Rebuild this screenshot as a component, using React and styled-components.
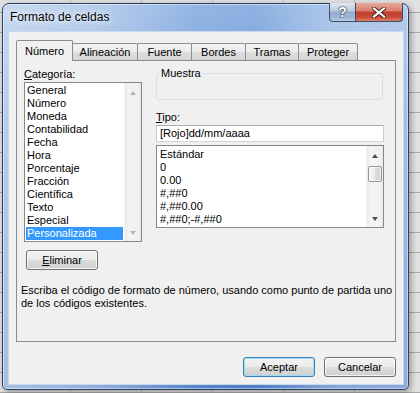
import React from "react";
import styled, { createGlobalStyle, css } from "styled-components";

const GlobalStyle = createGlobalStyle`
  html, body { margin: 0; padding: 0; }
  body {
    width: 420px;
    height: 393px;
    overflow: hidden;
    background-color: #e2e2e2;
    background-image:
      linear-gradient(#a9a9a9 1px, transparent 1px),
      linear-gradient(90deg, #bdbdbd 1px, transparent 1px);
    background-size: 71px 20px;
    background-position: 0 12px, 70px 0;
    font-family: "Liberation Sans", Arial, sans-serif;
    font-size: 11px;
    color: #000;
  }
`;

const Page = styled.div`
  padding: 3px 0 0 2px;
`;

const Window = styled.div`
  box-sizing: border-box;
  width: 407px;
  height: 387px;
  display: flex;
  flex-direction: column;
  padding: 0 5px 5px 6px;
  border: 1px solid #2b4263;
  border-radius: 7px 7px 5px 5px;
  background:
    linear-gradient(90deg, rgba(255,255,255,0.5) 0%, rgba(255,255,255,0.38) 22%, rgba(255,255,255,0.05) 48%, rgba(255,255,255,0) 62%, rgba(255,255,255,0.3) 82%, rgba(255,255,255,0.35) 100%),
    linear-gradient(180deg, #8fb2e2 0%, #6f9bd9 30%, #5d8ad0 70%, #4f7ec6 100%);
  box-shadow: 2px 2px 6px rgba(0, 0, 0, 0.35), inset 0 0 0 1px rgba(255, 255, 255, 0.45);
`;

const TitleBar = styled.div`
  height: 28px;
  display: flex;
  align-items: flex-start;
  padding-left: 1px;
`;

const Title = styled.div`
  flex: 1;
  margin-top: 6px;
  font-size: 12px;
  line-height: 15px;
  text-shadow: 0 0 5px #fff, 0 0 9px rgba(255, 255, 255, 0.85);
`;

const CaptionButtons = styled.div`
  display: flex;
  margin-top: -1px;
`;

const CaptionButton = styled.div`
  box-sizing: border-box;
  width: ${(p) => p.$w}px;
  height: 19px;
  display: flex;
  align-items: center;
  justify-content: center;
  border: 1px solid #3a4c66;
  border-top: none;
  color: #fff;
  font-weight: bold;
  font-size: 14px;
  ${(p) =>
    p.$close
      ? css`
          border-left: none;
          border-radius: 0 0 4px 0;
          background: linear-gradient(180deg, #e9a89a 0%, #d9806e 42%, #c2402b 52%, #c84b35 78%, #de8066 100%);
        `
      : css`
          border-radius: 0 0 0 4px;
          background: linear-gradient(180deg, #dfe7f2 0%, #bccbe0 42%, #96aed0 52%, #9cb4d4 78%, #b9cce4 100%);
        `}
`;

const HelpGlyph = styled.span`
  line-height: 14px;
  text-shadow: 0 0 1px #27364d, 0 0 1px #27364d, 0 0 2px #27364d;
`;

const Client = styled.div`
  flex: 1;
  background: #f0f0f0;
  box-shadow: 0 0 0 1px #c9daf0;
  padding: 8px 7px 0 7px;
  display: flex;
  flex-direction: column;
`;

const TabRow = styled.div`
  display: flex;
  align-items: flex-end;
  height: 20px;
  position: relative;
  z-index: 1;
`;

const Tab = styled.div`
  box-sizing: border-box;
  width: ${(p) => p.$w}px;
  height: ${(p) => (p.$active ? 21 : 17)}px;
  margin-bottom: ${(p) => (p.$active ? -1 : 0)}px;
  margin-left: -1px;
  &:first-child { margin-left: 0; }
  border: 1px solid #898c95;
  border-bottom: none;
  border-radius: 2px 2px 0 0;
  padding-top: ${(p) => (p.$active ? 2 : 0)}px;
  line-height: 16px;
  text-align: center;
  white-space: nowrap;
  position: relative;
  z-index: ${(p) => (p.$active ? 2 : 1)};
  background: ${(p) =>
    p.$active
      ? "#f0f0f0"
      : "linear-gradient(180deg, #f3f3f3 0%, #ebebeb 50%, #dedede 51%, #d4d4d4 100%)"};
`;

const Panel = styled.div`
  box-sizing: border-box;
  width: 380px;
  height: 282px;
  border: 1px solid #898c95;
  background: #f0f0f0;
  padding: 6px 10px 0 4px;
`;

const TopRow = styled.div`
  display: flex;
  gap: 14px;
  padding-left: 3px;
`;

const LeftCol = styled.div`
  width: 118px;
  display: flex;
  flex-direction: column;
  align-items: flex-start;
`;

const RightCol = styled.div`
  width: 228px;
  display: flex;
  flex-direction: column;
`;

const Label = styled.div`
  line-height: 15px;
  margin-top: ${(p) => p.$top || 0}px;
`;

const Key = styled.span`
  text-decoration: underline;
`;

const ListBox = styled.div`
  box-sizing: border-box;
  width: ${(p) => p.$w}px;
  height: ${(p) => p.$h}px;
  margin-top: ${(p) => p.$top || 0}px;
  border: 1px solid #828790;
  background: #fff;
  display: flex;
  overflow: hidden;
`;

const Items = styled.div`
  flex: 1;
  padding-top: ${(p) => p.$pad}px;
  padding-left: ${(p) => p.$indent}px;
  overflow: hidden;
`;

const Item = styled.div`
  height: 13px;
  line-height: 13px;
  margin-right: 1px;
  padding-left: 1px;
  white-space: nowrap;
  ${(p) =>
    p.$selected &&
    css`
      background: #3399ff;
      color: #fff;
    `}
`;

const ScrollBar = styled.div`
  width: 17px;
  display: flex;
  flex-direction: column;
  background: linear-gradient(90deg, #e7e7e7 0%, #f4f4f4 20%, #f1f1f1 80%, #e9e9e9 100%);
  border-left: 1px solid #f7f7f7;
  box-sizing: border-box;
`;

const ScrollButton = styled.div`
  height: 17px;
  display: flex;
  justify-content: center;
  align-items: center;
  padding-top: ${(p) => (p.$up ? 3 : 0)}px;
  box-sizing: border-box;
`;

const Arrow = styled.span`
  width: 0;
  height: 0;
  border-left: 3.5px solid transparent;
  border-right: 3.5px solid transparent;
  ${(p) =>
    p.$up
      ? css`border-bottom: 4px solid ${p.$off ? "#b4b4b4" : "#4f4f4f"};`
      : css`border-top: 4px solid ${p.$off ? "#b4b4b4" : "#4f4f4f"};`}
`;

const Track = styled.div`
  flex: 1;
`;

const Thumb = styled.div`
  box-sizing: border-box;
  height: 16px;
  margin: 3px 1px 0 1px;
  border: 1px solid #979797;
  border-radius: 2px;
  background: linear-gradient(90deg, #f4f4f4 0%, #ececec 50%, #dcdcdc 51%, #d2d2d2 100%);
  box-shadow: inset 0 0 0 1px rgba(255, 255, 255, 0.7);
`;

const Button = styled.div`
  box-sizing: border-box;
  width: 72px;
  height: 20px;
  margin-left: ${(p) => p.$left || 0}px;
  margin-top: ${(p) => p.$top || 0}px;
  border: 1px solid ${(p) => (p.$default ? "#3c7fb1" : "#707070")};
  border-radius: 3px;
  line-height: 18px;
  text-align: center;
  background: linear-gradient(180deg, #f3f3f3 0%, #ebebeb 48%, #dddddd 50%, #cfcfcf 100%);
  box-shadow: inset 0 0 0 1px ${(p) => (p.$default ? "#9edbf8" : "rgba(255,255,255,0.75)")};
`;

const Group = styled.fieldset`
  box-sizing: border-box;
  width: 227px;
  margin: 0;
  padding: 0 3px;
  border: 1px solid #d5dfe5;
  border-radius: 3px;
`;

const Legend = styled.legend`
  padding: 0 1px;
  line-height: 13px;
`;

const Sample = styled.div`
  height: 19px;
`;

const TextBox = styled.div`
  box-sizing: border-box;
  width: 228px;
  height: 17px;
  border: 1px solid;
  border-color: #abadb3 #c9ccd3 #d2d6dc #c9ccd3;
  background: #fff;
  padding-left: 3px;
  line-height: 15px;
`;

const Description = styled.div`
  margin-top: 14px;
  line-height: 13px;
  white-space: nowrap;
`;

const ButtonRow = styled.div`
  display: flex;
  justify-content: flex-end;
  gap: 9px;
  margin-top: 15px;
  width: 380px;
`;

const CloseIcon = () => (
  <svg width="14" height="11" viewBox="0 0 14 11">
    <path d="M2 1.5 L12 9.5 M12 1.5 L2 9.5" stroke="#3a1d18" strokeWidth="4" strokeLinecap="square" />
    <path d="M2 1.5 L12 9.5 M12 1.5 L2 9.5" stroke="#fff" strokeWidth="2.2" strokeLinecap="square" />
  </svg>
);

const tabs = [
  { label: "Número", w: 57, active: true },
  { label: "Alineación", w: 66 },
  { label: "Fuente", w: 55 },
  { label: "Bordes", w: 55 },
  { label: "Tramas", w: 54 },
  { label: "Proteger", w: 60 },
];

const categories = [
  "General",
  "Número",
  "Moneda",
  "Contabilidad",
  "Fecha",
  "Hora",
  "Porcentaje",
  "Fracción",
  "Científica",
  "Texto",
  "Especial",
  "Personalizada",
];

const formats = ["Estándar", "0", "0.00", "#,##0", "#,##0.00", "#,##0;-#,##0"];

export default function App() {
  return (
    <Page>
      <GlobalStyle />
      <Window>
        <TitleBar>
          <Title>Formato de celdas</Title>
          <CaptionButtons>
            <CaptionButton $w={27}>
              <HelpGlyph>?</HelpGlyph>
            </CaptionButton>
            <CaptionButton $w={47} $close>
              <CloseIcon />
            </CaptionButton>
          </CaptionButtons>
        </TitleBar>
        <Client>
          <TabRow>
            {tabs.map((t) => (
              <Tab key={t.label} $w={t.w} $active={t.active}>
                {t.label}
              </Tab>
            ))}
          </TabRow>
          <Panel>
            <TopRow>
              <LeftCol>
                <Label>
                  <Key>C</Key>ategoría:
                </Label>
                <ListBox $w={118} $h={160}>
                  <Items $pad={1} $indent={1}>
                    {categories.map((c) => (
                      <Item key={c} $selected={c === "Personalizada"}>
                        {c}
                      </Item>
                    ))}
                  </Items>
                  <ScrollBar>
                    <ScrollButton $up>
                      <Arrow $up $off />
                    </ScrollButton>
                    <Track />
                    <ScrollButton>
                      <Arrow $off />
                    </ScrollButton>
                  </ScrollBar>
                </ListBox>
                <Button $left={2} $top={8}>
                  <Key>E</Key>liminar
                </Button>
              </LeftCol>
              <RightCol>
                <Group>
                  <Legend>Muestra</Legend>
                  <Sample />
                </Group>
                <Label $top={10}>
                  <Key>T</Key>ipo:
                </Label>
                <TextBox>[Rojo]dd/mm/aaaa</TextBox>
                <ListBox $w={228} $h={83} $top={3}>
                  <Items $pad={2} $indent={2}>
                    {formats.map((f) => (
                      <Item key={f}>{f}</Item>
                    ))}
                  </Items>
                  <ScrollBar>
                    <ScrollButton $up>
                      <Arrow $up />
                    </ScrollButton>
                    <Track>
                      <Thumb />
                    </Track>
                    <ScrollButton>
                      <Arrow />
                    </ScrollButton>
                  </ScrollBar>
                </ListBox>
              </RightCol>
            </TopRow>
            <Description>
              Escriba el código de formato de número, usando como punto de partida uno
              <br />
              de los códigos existentes.
            </Description>
          </Panel>
          <ButtonRow>
            <Button $default>Aceptar</Button>
            <Button>Cancelar</Button>
          </ButtonRow>
        </Client>
      </Window>
    </Page>
  );
}
